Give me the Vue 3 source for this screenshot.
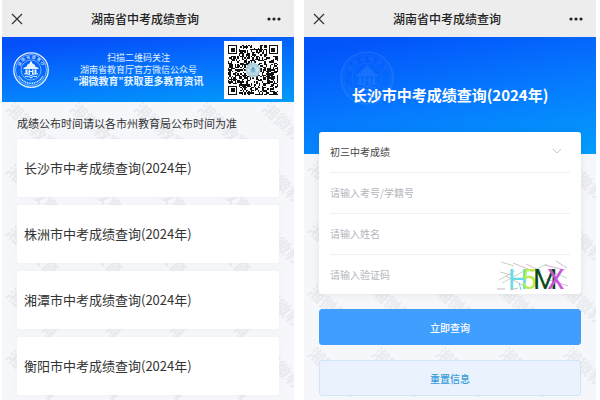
<template>
  <div class="screens">
    <svg class="defs" aria-hidden="true">
      <defs>
        <symbol id="emblem" viewBox="0 0 72 72">
          <g fill="none" stroke="currentColor">
            <circle cx="36" cy="36" r="34.5" stroke-width="2.5" />
            <circle cx="36" cy="36" r="31" stroke-width="1" />
            <circle cx="36" cy="36" r="20" stroke-width="1" />
            <path d="M12 48a27 27 0 0 0 48 0" stroke-width="3" stroke-dasharray="2 1.5" />
            <path d="M22 44c5-1 10 0 14 4c4-4 9-5 14-4M24 49c5-1 9 0 12 3c3-3 7-4 12-3" stroke-width="2" />
          </g>
          <path
            fill="currentColor"
            d="M34 19h4v3l6 4v2h-16v-2l6-4zM21 32l8-4h14l8 4v2H21zM25 35h4v9h-4zM43 35h4v9h-4zM31 35h3v10h-3zM38 35h3v10h-3zM34 38h4v2h-4z"
          />
          <path id="arc" d="M14 43a23 23 0 1 1 44 0" fill="none" />
          <text fill="currentColor" font-size="8">
            <textPath href="#arc" startOffset="50%" text-anchor="middle">湖 南 省 教 育 厅</textPath>
          </text>
        </symbol>
      </defs>
    </svg>

    <section class="phone">
      <header class="bar">
        <button class="icon-btn" type="button" aria-label="关闭">
          <svg width="12" height="12" viewBox="0 0 12 12"><path d="M1 1l10 10M11 1L1 11" /></svg>
        </button>
        <h1 class="bar-title">{{ appTitle }}</h1>
        <button class="icon-btn" type="button" aria-label="更多">
          <svg width="14" height="12" viewBox="0 0 14 12">
            <circle v-for="x in [2, 7, 12]" :key="x" :cx="x" cy="6" r="1.6" />
          </svg>
        </button>
      </header>

      <div class="banner">
        <svg class="logo"><use href="#emblem" /></svg>
        <div class="banner-text">
          <p>扫描二维码关注</p>
          <p>湖南省教育厅官方微信公众号</p>
          <p class="strong">“湘微教育”获取更多教育资讯</p>
        </div>
        <div class="qr">
          <svg viewBox="0 0 37 37" shape-rendering="crispEdges">
            <path :d="qrPath" fill="#111" />
            <g v-for="f in finders" :key="f.join()" :transform="`translate(${f[0]} ${f[1]})`">
              <rect width="7" height="7" fill="#111" />
              <rect x="1" y="1" width="5" height="5" fill="#fff" />
              <rect x="2" y="2" width="3" height="3" fill="#111" />
            </g>
            <g shape-rendering="auto">
              <circle cx="18.5" cy="18.5" r="5.5" fill="#d9e8ee" />
              <use href="#emblem" x="13.5" y="13.5" width="10" height="10" color="#4b9cc4" />
            </g>
          </svg>
        </div>
      </div>

      <div class="body">
        <svg class="watermark" aria-hidden="true">
          <defs>
            <pattern id="wm-left" x="0" y="-4" width="64" height="62" patternUnits="userSpaceOnUse">
              <text x="3" y="12" transform="rotate(43 3 12)">湘微教育</text>
            </pattern>
          </defs>
          <rect width="100%" height="100%" fill="url(#wm-left)" />
        </svg>
        <p class="notice">成绩公布时间请以各市州教育局公布时间为准</p>
        <nav class="cities">
          <a v-for="city in cities" :key="city" class="city" href="#">{{ city }}中考成绩查询(2024年)</a>
        </nav>
      </div>
    </section>

    <section class="phone">
      <header class="bar">
        <button class="icon-btn" type="button" aria-label="关闭">
          <svg width="12" height="12" viewBox="0 0 12 12"><path d="M1 1l10 10M11 1L1 11" /></svg>
        </button>
        <h1 class="bar-title">{{ appTitle }}</h1>
        <button class="icon-btn" type="button" aria-label="更多">
          <svg width="14" height="12" viewBox="0 0 14 12">
            <circle v-for="x in [2, 7, 12]" :key="x" :cx="x" cy="6" r="1.6" />
          </svg>
        </button>
      </header>

      <div class="hero">
        <svg class="hero-logo"><use href="#emblem" /></svg>
        <h2>长沙市中考成绩查询(2024年)</h2>
      </div>

      <div class="body">
        <svg class="watermark" aria-hidden="true">
          <defs>
            <pattern id="wm-right" x="0" y="3" width="64" height="62" patternUnits="userSpaceOnUse">
              <text x="3" y="12" transform="rotate(43 3 12)">湘微教育</text>
            </pattern>
          </defs>
          <rect width="100%" height="100%" fill="url(#wm-right)" />
        </svg>
        <form class="form" @submit.prevent @reset="exam = '初三中考成绩'">
          <div class="fields">
            <div class="field">
              <select v-model="exam" aria-label="考试类型">
                <option>初三中考成绩</option>
              </select>
              <svg class="chevron" width="10" height="6" viewBox="0 0 10 6"><path d="M1 1l4 4l4-4" /></svg>
            </div>
            <div v-for="field in fields" :key="field" class="field">
              <input type="text" :placeholder="field" :aria-label="field" />
            </div>
            <div class="field">
              <input type="text" placeholder="请输入验证码" aria-label="请输入验证码" />
              <svg class="captcha" width="74" height="32" viewBox="0 0 74 32">
                <g fill="none" stroke-width="0.5">
                  <path d="M5 3l13 4M4 13l12 3M3 21l16-9" stroke="#8aa77c" />
                  <path d="M17 4l20 8M10 17l18 10M30 5l15 7" stroke="#b27a90" />
                  <path d="M35 13l16-8M6 24l22-12M55 13l16 6" stroke="#79b98c" />
                  <path d="M60 2l11 7M49 6l20 5M50 20l22 7" stroke="#b465b8" />
                  <path d="M1 30h8M14 31l8-2" stroke="#777" />
                  <path d="M23 24l2 7" stroke="#63d9df" stroke-width="1" />
                </g>
                <text x="12" y="30" fill="#68dce4">H</text>
                <text x="25" y="30" fill="#b5ef4e">5</text>
                <text x="37" y="30" fill="#0c4a16">M</text>
                <text x="51" y="30" fill="#c957d8">X</text>
              </svg>
            </div>
          </div>
          <button class="btn primary" type="submit">立即查询</button>
          <button class="btn plain" type="reset">重置信息</button>
        </form>
      </div>
    </section>
  </div>
</template>

<script setup>
import { ref } from 'vue';

const appTitle = '湖南省中考成绩查询';
const cities = ['长沙市', '株洲市', '湘潭市', '衡阳市'];
const fields = ['请输入考号/学籍号', '请输入姓名'];
const exam = ref('初三中考成绩');

const finders = [
  [0, 0],
  [30, 0],
  [0, 30],
];

// Fill every module outside the three finder squares from a seeded generator.
const buildQr = () => {
  let seed = 2024;
  let path = '';
  for (let y = 0; y < 37; y++) {
    for (let x = 0; x < 37; x++) {
      seed = (seed * 1103515245 + 12345) % 2147483648;
      const inFinder = finders.some(
        ([fx, fy]) => x >= fx - 1 && x <= fx + 7 && y >= fy - 1 && y <= fy + 7
      );
      if (!inFinder && seed / 2147483648 > 0.48) path += `M${x} ${y}h1v1h-1z`;
    }
  }
  return path;
};

const qrPath = buildQr();
</script>

<style>
body {
  margin: 0;
  background: #fff;
}
</style>

<style scoped>
.screens {
  display: grid;
  grid-template-columns: 1fr 1fr;
  gap: 10px;
  min-height: 100vh;
  padding: 0 4px 0 2px;
  box-sizing: border-box;
  color: #333;
  font-family: "Noto Sans CJK SC", sans-serif;
}

.defs {
  position: absolute;
  width: 0;
  height: 0;
}

h1,
h2,
p {
  margin: 0;
}

button,
input,
select {
  font-family: inherit;
}

.phone {
  display: flex;
  flex-direction: column;
  min-width: 0;
  background: #f6f7fb;
}

.bar {
  display: flex;
  align-items: center;
  height: 37px;
  padding: 0 13px 0 9px;
  box-sizing: border-box;
  background: #ededed;
}

.bar-title {
  flex: 1;
  color: #222;
  font-size: 12px;
  font-weight: 500;
  text-align: center;
}

.icon-btn {
  display: flex;
  padding: 0;
  border: 0;
  background: none;
}

.icon-btn path {
  fill: none;
  stroke: #333;
  stroke-width: 1.2;
}

.icon-btn circle {
  fill: #222;
}

.banner {
  display: flex;
  align-items: center;
  height: 65px;
  padding: 0 12px 0 11px;
  box-sizing: border-box;
  color: #e3f3ff;
  background: linear-gradient(175deg, #0550fa 10%, #0576fd 55%, #029bfb 100%);
}

.logo {
  width: 36px;
  height: 36px;
}

.banner-text {
  flex: 1;
  padding-left: 4px;
  font-size: 9px;
  line-height: 12px;
  text-align: center;
  white-space: nowrap;
}

.banner-text .strong {
  font-family: "Liberation Sans", "Noto Sans CJK SC", sans-serif;
  font-size: 10px;
  font-weight: 700;
}

.qr {
  display: flex;
  width: 58px;
  height: 58px;
  padding: 4px;
  box-sizing: border-box;
  background: #fff;
}

.qr > svg {
  width: 100%;
}

.body {
  position: relative;
  flex: 1;
  padding: 0 15px 4px;
}

.watermark {
  position: absolute;
  top: 0;
  left: 0;
  width: 100%;
  height: 100%;
}

.watermark text {
  fill: #e9eaee;
  font-size: 16px;
  font-weight: 700;
}

.notice {
  position: relative;
  padding: 13px 0 8px;
  font-size: 11px;
  line-height: 16px;
}

.cities {
  position: relative;
  display: flex;
  flex-direction: column;
  gap: 8px;
}

.city {
  padding: 0 7px;
  border-radius: 3px;
  color: #333;
  background: #fff;
  font-size: 13px;
  line-height: 58px;
  text-decoration: none;
  box-shadow: 0 0 6px rgba(0, 0, 0, 0.03);
}

.hero {
  position: relative;
  height: 117px;
  color: #fff;
  background: linear-gradient(170deg, #0254fb 8%, #067bfe 55%, #039efb 100%);
}

.hero h2 {
  position: relative;
  padding-top: 46px;
  font-size: 15px;
  font-weight: 700;
  line-height: 24px;
  text-align: center;
}

.hero-logo {
  position: absolute;
  top: 14px;
  left: 36px;
  width: 54px;
  height: 54px;
  opacity: 0.08;
}

.form {
  position: relative;
  display: flex;
  flex-direction: column;
  gap: 15px;
  margin-top: -22px;
}

.fields {
  padding: 0 11px;
  border-radius: 3px;
  background: #fff;
  box-shadow: 0 0 8px rgba(0, 0, 0, 0.08);
}

.field {
  display: flex;
  align-items: center;
  height: 41px;
  padding-bottom: 2px;
  box-sizing: border-box;
  border-bottom: 1px solid #f0f0f2;
}

.field:last-child {
  height: 39px;
  padding-bottom: 0;
  border-bottom: 0;
}

.field input,
.field select {
  flex: 1;
  min-width: 0;
  height: 100%;
  padding: 0;
  border: 0;
  outline: 0;
  color: #444;
  background: transparent;
  font-size: 10px;
  appearance: none;
}

.field input::placeholder {
  color: #b4b6bd;
}

.chevron {
  margin-right: 8px;
  fill: none;
  stroke: #c5c7cc;
}

.captcha {
  overflow: visible;
}

.captcha text {
  font-family: Roboto, sans-serif;
  font-size: 28px;
}

.btn {
  height: 36px;
  padding: 0;
  border: 1px solid #409eff;
  border-radius: 3px;
  font-size: 10px;
  font-weight: 500;
}

.primary {
  color: #fff;
  background: #409eff;
}

.plain {
  border-color: #cfe5f5;
  color: #389bd6;
  background: #eaf2fe;
}
</style>
